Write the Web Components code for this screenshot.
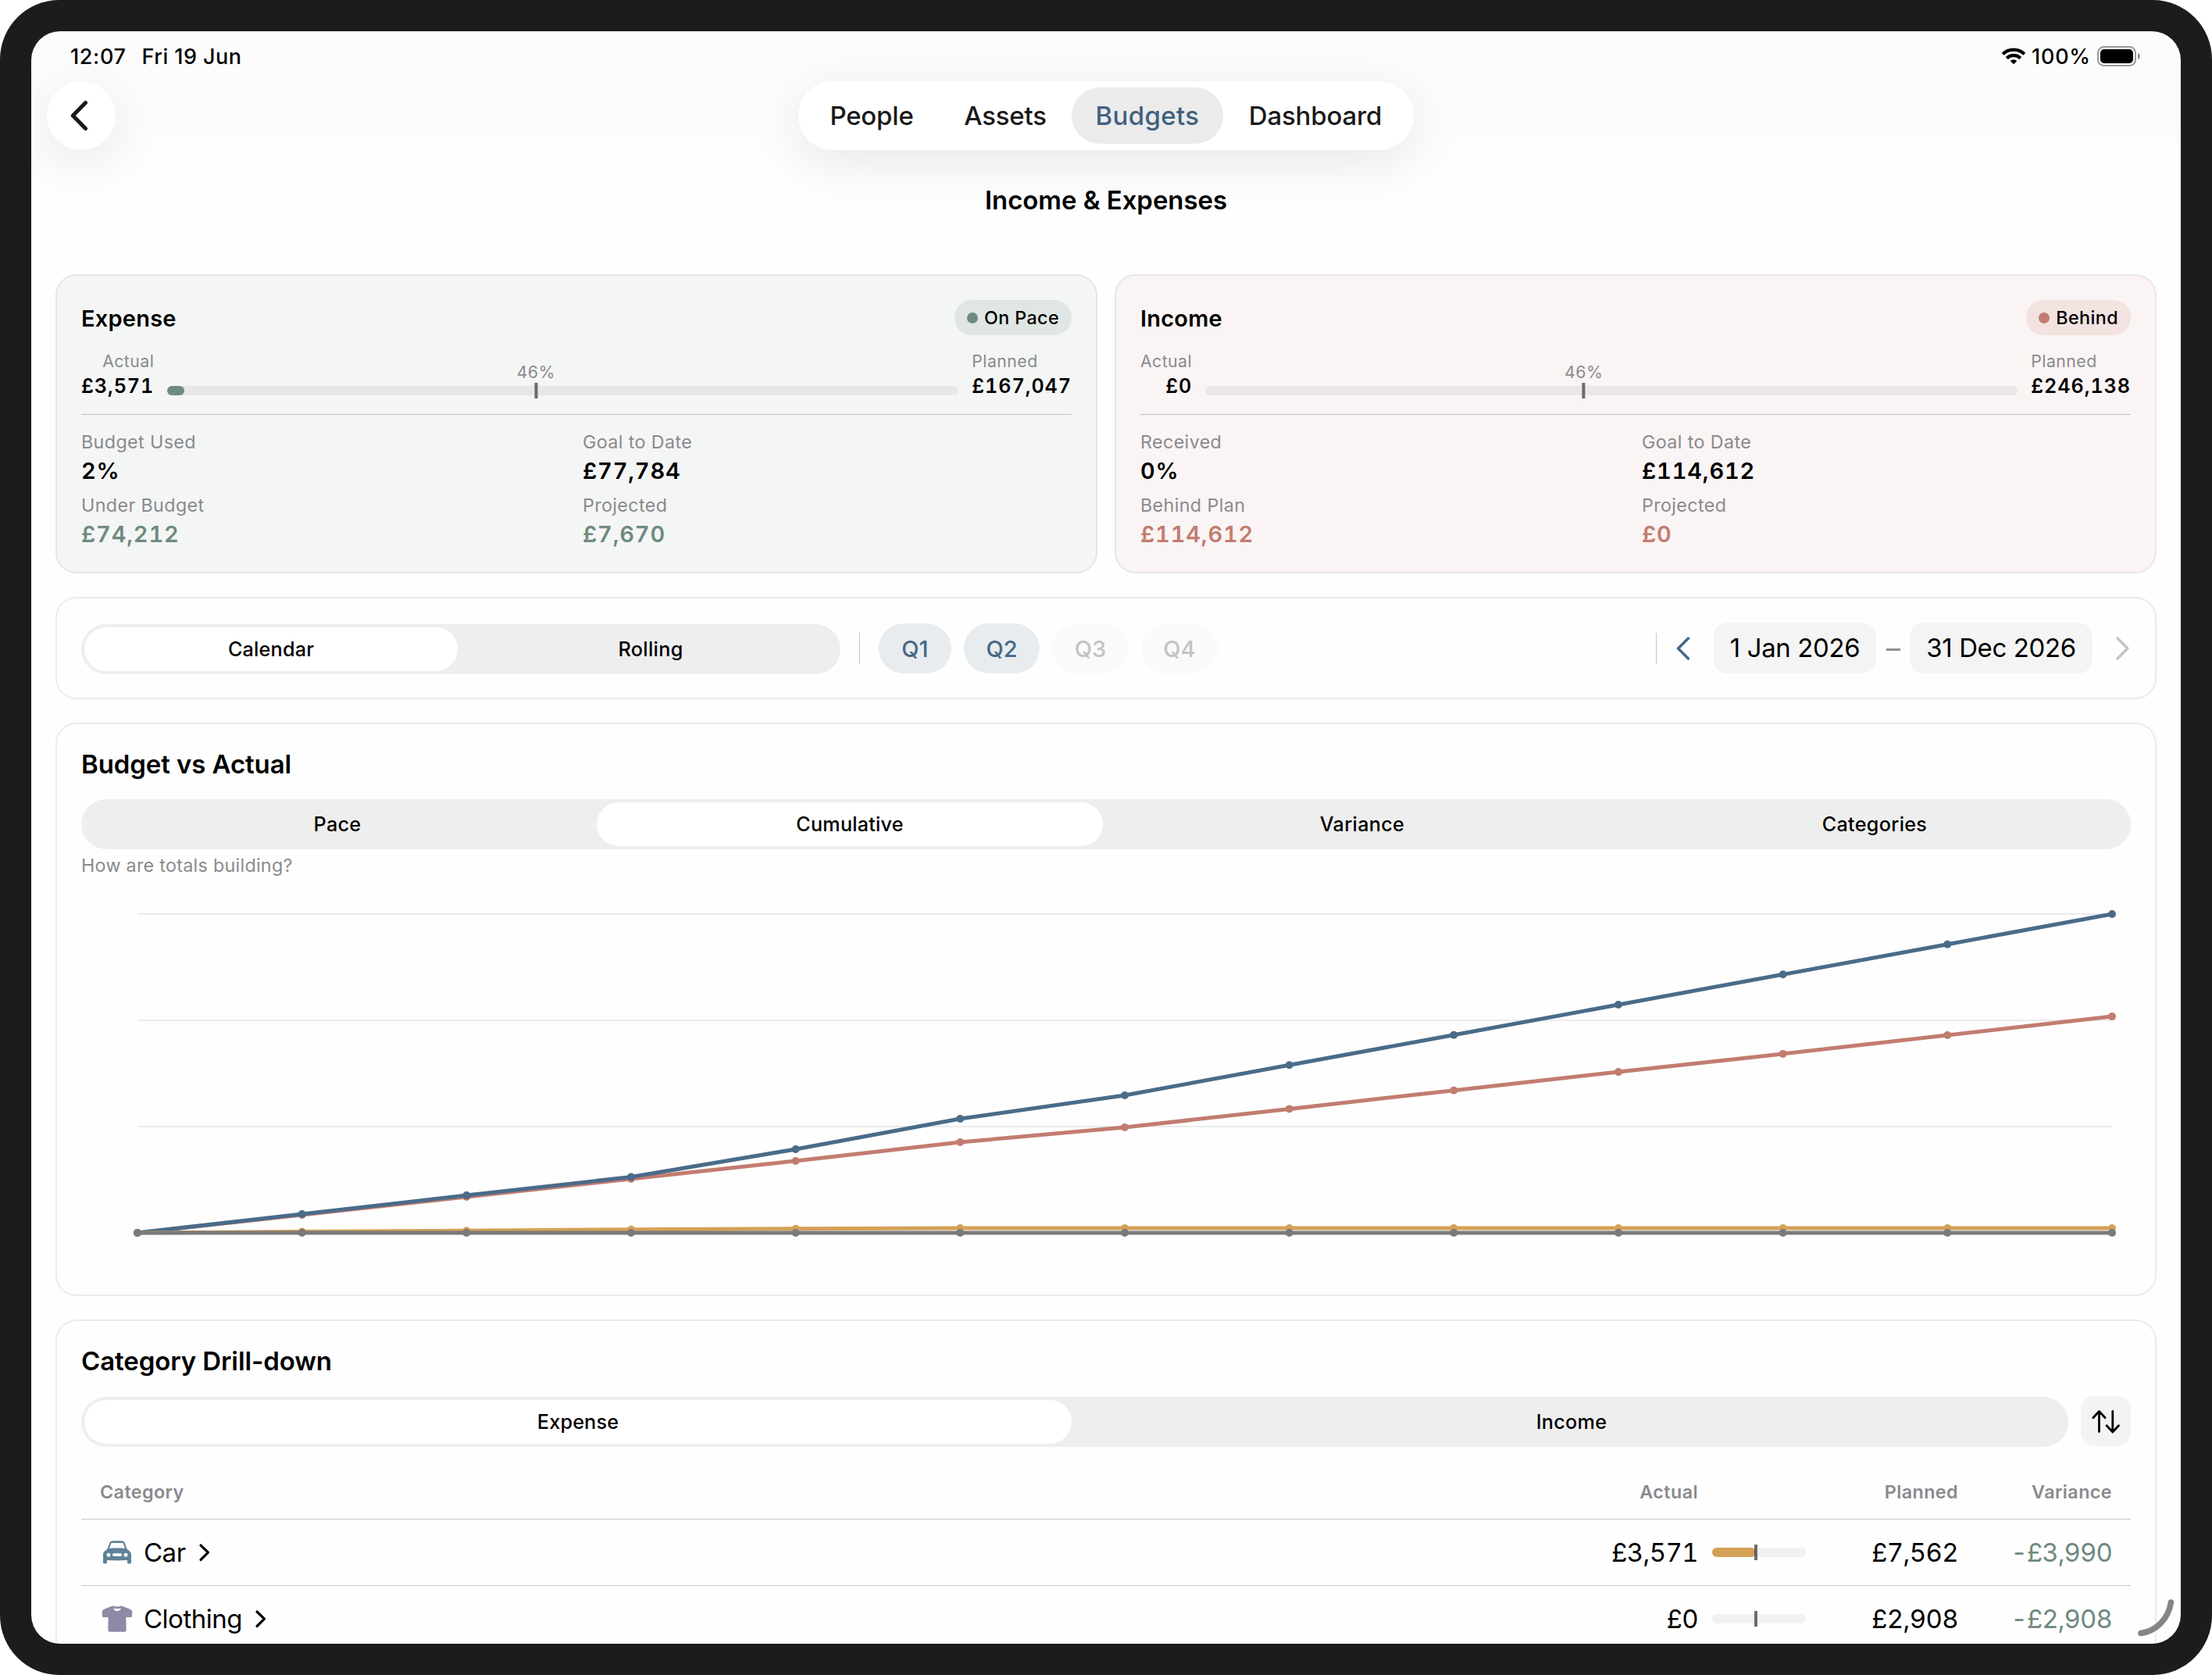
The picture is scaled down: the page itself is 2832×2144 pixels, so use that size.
<!DOCTYPE html>
<html lang="en">
<head>
  <meta charset="utf-8">
  <title>Income &amp; Expenses</title>
  <style>
    html, body {
      margin: 0;
      background: #fff;
    }
    body {
      width: 2832px;
      height: 2144px;
      overflow: hidden;
      font-family: Inter, "Liberation Sans", sans-serif;
      color: #000;
      --blue: #466886;
      --green: #6f8b7d;
      --red: #c27c70;
      --orange: #d4a157;
      --muted: #8a8a8e;
      --line: #c6c6c8;
    }
  </style>
</head>
<body>
  <tablet-frame>
    <status-bar time="12:07" date="Fri 19 Jun" battery="100%"></status-bar>
    <top-nav tabs="People:172,Assets:170,Budgets:194,Dashboard:236" selected="Budgets"></top-nav>
    <page-title>Income &amp; Expenses</page-title>

    <card-stack>
      <card-row>
        <budget-card heading="Expense" tone="green" status="On Pace" actual="£3,571" planned="£167,047"
          fill="22" pace="46">
          <metric-item label="Budget Used">2%</metric-item>
          <metric-item label="Goal to Date">£77,784</metric-item>
          <metric-item label="Under Budget" tinted>£74,212</metric-item>
          <metric-item label="Projected" tinted>£7,670</metric-item>
        </budget-card>
        <budget-card heading="Income" tone="red" status="Behind" actual="£0" planned="£246,138"
          fill="0" pace="46">
          <metric-item label="Received">0%</metric-item>
          <metric-item label="Goal to Date">£114,612</metric-item>
          <metric-item label="Behind Plan" tinted>£114,612</metric-item>
          <metric-item label="Projected" tinted>£0</metric-item>
        </budget-card>
      </card-row>

      <filter-bar></filter-bar>

      <panel-card heading="Budget vs Actual" style="height: 734px">
        <segmented-control options="Pace,Cumulative,Variance,Categories" selected="Cumulative"></segmented-control>
        <cumulative-chart>How are totals building?</cumulative-chart>
      </panel-card>

      <panel-card heading="Category Drill-down" style="height: 520px">
        <drill-toolbar></drill-toolbar>
        <category-head></category-head>
        <category-row name="Car" icon="car" actual="£3,571" planned="£7,562" variance="-£3,990" fill="56"></category-row>
        <category-row name="Clothing" icon="shirt" actual="£0" planned="£2,908" variance="-£2,908" fill="0"></category-row>
      </panel-card>
    </card-stack>
  </tablet-frame>

  <script>
    class BaseElement extends HTMLElement {
      constructor() {
        super();
        this._shadowRoot = this.attachShadow({ mode: 'open' });
      }

      connectedCallback() {
        this._shadowRoot.innerHTML = `
          <style>
            *, :host { box-sizing: border-box; }
            :host([hidden]) { display: none; }
            ${this.styles()}
          </style>
          ${this.render()}
        `;
      }

      attr(name) {
        return this.getAttribute(name) || '';
      }

      styles() { return ''; }
      render() { return '<slot></slot>'; }
    }

    class TabletFrame extends BaseElement {
      styles() {
        return `
          :host {
            display: block;
            width: 2832px;
            height: 2144px;
            padding: 40px;
            background: #1c1c1e;
            border-radius: 76px;
            position: relative;
          }
          .screen {
            display: flex;
            flex-direction: column;
            height: 2064px;
            overflow: hidden;
            border-radius: 37px;
            background: linear-gradient(#fcfcfc 0, #fcfcfc 110px, #fefefe 190px, #fefefe 100%);
          }
          /* window resize handle, floats over the content */
          .grip {
            position: absolute;
            right: 48px;
            bottom: 46px;
            width: 54px;
            height: 58px;
          }
        `;
      }

      render() {
        return `
          <div class="screen"><slot></slot></div>
          <svg class="grip" viewBox="0 0 54 58" fill="none" stroke="#858585" stroke-width="7.5" stroke-linecap="round">
            <path d="M49.500 11C46 32 31 48 11 50.500"/>
          </svg>
        `;
      }
    }

    class StatusBar extends BaseElement {
      styles() {
        return `
          :host {
            display: flex;
            flex: none;
            align-items: center;
            height: 64px;
            padding: 0 50px 0 50px;
            font-size: 27px;
            font-weight: 500;
            letter-spacing: 0.023em;
          }
          .date { margin-left: 20px; flex: 1; letter-spacing: 0.017em; }
          .wifi { width: 32px; height: 22px; margin-right: 7px; }
          .level { margin-right: 7px; letter-spacing: 0.03em; }
          .cell { width: 58px; height: 28px; }
        `;
      }

      render() {
        return `
          <span>${this.attr('time')}</span>
          <span class="date">${this.attr('date')}</span>
          <svg class="wifi" viewBox="0 0 32 22" fill="none" stroke="#000" stroke-width="4.200">
            <path d="M2.200 8.300a19.500 19.500 0 0 1 27.600 0"/>
            <path d="M7.200 13.600a12.400 12.400 0 0 1 17.600 0"/>
            <path d="M16 21.300l-4.300-4.300a6.200 6.200 0 0 1 8.600 0z" fill="#000" stroke="none"/>
          </svg>
          <span class="level">${this.attr('battery')}</span>
          <svg class="cell" viewBox="0 0 58 28">
            <rect x="2" y="2" width="48" height="24" rx="7.500" fill="none" stroke="#999" stroke-width="2"/>
            <rect x="5" y="5" width="42" height="18" rx="5" fill="#000"/>
            <path d="M53 10c3.800 1 3.800 7 0 8z" fill="#8e8e8e"/>
          </svg>
        `;
      }
    }

    class TopNav extends BaseElement {
      styles() {
        return `
          :host {
            display: grid;
            grid-template-columns: 1fr auto 1fr;
            flex: none;
            height: 88px;
            padding: 0 20px;
          }
          .back, .tabs {
            height: 88px;
            border-radius: 44px;
            background: #fff;
            box-shadow: 0 16px 70px rgba(0, 0, 0, 0.09);
          }
          .back {
            display: flex;
            align-items: center;
            justify-content: center;
            width: 88px;
          }
          .back svg { margin-right: 2px; }
          .tabs {
            display: flex;
            padding: 8px;
            font-size: 33px;
            font-weight: 500;
            letter-spacing: -0.006em;
            color: #1a1a1a;
          }
          .tab {
            display: flex;
            align-items: center;
            justify-content: center;
            height: 72px;
            border-radius: 36px;
          }
          .tab.on { background: #ebebeb; color: #41607e; letter-spacing: 0.01em; }
        `;
      }

      render() {
        const tabs = this.attr('tabs').split(',').map((entry) => {
          const [label, width] = entry.split(':');
          const on = label === this.attr('selected') ? ' on' : '';
          return `<div class="tab${on}" style="width: ${width}px">${label}</div>`;
        });
        return `
          <div class="back">
            <svg width="26" height="42" viewBox="0 0 26 42" fill="none" stroke="#1a1a1a" stroke-width="5" stroke-linecap="round" stroke-linejoin="round">
              <path d="M19.500 4.500L3.300 21l16.200 16.500"/>
            </svg>
          </div>
          <div class="tabs">${tabs.join('')}</div>
        `;
      }
    }

    class PageTitle extends BaseElement {
      styles() {
        return `
          :host {
            flex: none;
            height: 128px;
            text-align: center;
            font-size: 33px;
            font-weight: 600;
            line-height: 128px;
            letter-spacing: -0.002em;
          }
        `;
      }
    }

    class CardStack extends BaseElement {
      styles() {
        return `
          :host {
            display: flex;
            flex-direction: column;
            flex: none;
            gap: 30px;
            padding: 31px 31px 0;
          }
        `;
      }
    }

    class CardRow extends BaseElement {
      styles() {
        return `
          :host {
            display: grid;
            grid-template-columns: 1fr 1fr;
            gap: 22px;
          }
        `;
      }
    }

    class MetricItem extends BaseElement {
      styles() {
        return `
          :host { display: block; }
          .label {
            font-size: 23.3px;
            line-height: 34px;
            letter-spacing: 0.016em;
            color: var(--muted);
          }
          .value {
            font-size: 29px;
            font-weight: 560;
            line-height: 40px;
            letter-spacing: 0.028em;
            font-variant-numeric: tabular-nums;
          }
          :host([tinted]) .value { color: var(--tone); }
        `;
      }

      render() {
        return `
          <div class="label">${this.attr('label')}</div>
          <div class="value"><slot></slot></div>
        `;
      }
    }

    class BudgetCard extends BaseElement {
      styles() {
        return `
          :host {
            display: block;
            height: 383px;
            padding: 31px;
            border: 2px solid #e4e6e5;
            border-radius: 27px;
          }
          :host([tone="green"]) { --tone: var(--green); --badge: #e0e6e3; --track: #e6e8e7; background: #f4f6f5; }
          :host([tone="red"]) { --tone: var(--red); --badge: #f2e3e0; --track: #ebe7e6; background: #faf4f4; border-color: #e8e6e6; }
          .head {
            display: flex;
            justify-content: space-between;
            align-items: center;
            height: 45px;
            font-size: 29px;
            font-weight: 600;
            letter-spacing: 0.008em;
          }
          .head span { padding-top: 2px; }
          .badge {
            display: flex;
            align-items: center;
            gap: 8px;
            height: 45px;
            padding: 0 16px 0 16px;
            border-radius: 23px;
            background: var(--badge);
            font-size: 23.3px;
            font-weight: 500;
            letter-spacing: 0.017em;
          }
          .dot {
            width: 14px;
            height: 14px;
            border-radius: 50%;
            background: var(--tone);
          }
          .totals {
            display: flex;
            gap: 17px;
            margin-top: 18px;
          }
          .total { font-variant-numeric: tabular-nums; }
          .total.right { text-align: right; }
          .total small {
            display: block;
            font-size: 21.3px;
            line-height: 30px;
            letter-spacing: 0.02em;
            color: var(--muted);
          }
          .total b {
            display: block;
            font-size: 25.2px;
            font-weight: 570;
            line-height: 34px;
            letter-spacing: 0.036em;
          }
          .gauge {
            display: flex;
            flex: 1;
            align-items: flex-end;
            height: 64px;
            padding-bottom: 5px;
          }
          .track {
            position: relative;
            flex: 1;
            height: 12px;
            border-radius: 6px;
            background: var(--track);
          }
          .fill {
            height: 12px;
            border-radius: 6px;
            background: var(--tone);
          }
          .pace {
            position: absolute;
            bottom: -4px;
            left: 46.58%;
            display: flex;
            flex-direction: column;
            align-items: center;
            transform: translateX(-50%);
            font-size: 21.3px;
            line-height: 28px;
            letter-spacing: 0.02em;
            color: var(--muted);
          }
          .pace i {
            width: 4px;
            height: 20px;
            background: #6b6b6b;
          }
          .rule {
            height: 1px;
            margin: 19px 0 18px;
            background: #bfc0c0;
          }
          .metrics {
            display: grid;
            grid-template-columns: 1fr 1fr;
            gap: 7px 16px;
          }
        `;
      }

      render() {
        return `
          <div class="head">
            <span>${this.attr('heading')}</span>
            <div class="badge"><div class="dot"></div>${this.attr('status')}</div>
          </div>
          <div class="totals">
            <div class="total right"><small>Actual</small><b>${this.attr('actual')}</b></div>
            <div class="gauge">
              <div class="track">
                <div class="fill" style="width: ${this.attr('fill')}px"></div>
                <div class="pace">${this.attr('pace')}%<i></i></div>
              </div>
            </div>
            <div class="total"><small>Planned</small><b>${this.attr('planned')}</b></div>
          </div>
          <div class="rule"></div>
          <div class="metrics"><slot></slot></div>
        `;
      }
    }

    class SegmentedControl extends BaseElement {
      styles() {
        return `
          :host {
            display: flex;
            height: 64px;
            border-radius: 32px;
            background: #eee;
            font-size: 25.2px;
            font-weight: 450;
            letter-spacing: 0.012em;
          }
          .option {
            display: flex;
            flex: 1 1 0;
            padding: 4px;
          }
          .option span {
            flex: 1;
            border-radius: 28px;
            line-height: 56px;
            text-align: center;
          }
          .option.on span {
            background: #fff;
            font-weight: 550;
            letter-spacing: 0.007em;
          }
        `;
      }

      render() {
        return this.attr('options').split(',').map((option) => {
          const on = option === this.attr('selected') ? ' on' : '';
          return `<div class="option${on}"><span>${option}</span></div>`;
        }).join('');
      }
    }

    class FilterBar extends BaseElement {
      styles() {
        return `
          :host {
            display: flex;
            align-items: center;
            height: 131px;
            padding: 0 31px;
            border: 2px solid #ebebeb;
            border-radius: 27px;
          }
          segmented-control { width: 972px; margin-top: 3px; }
          .bar { width: 1px; height: 40px; background: var(--line); }
          .quarters {
            display: flex;
            flex: 1;
            gap: 16px;
            margin-left: 24px;
          }
          .quarter {
            width: 98px;
            height: 64px;
            border-radius: 32px;
            background: #e8ecef;
            color: var(--blue);
            font-size: 29px;
            font-weight: 500;
            line-height: 65px;
            text-align: center;
          }
          .quarter.off { background: #fafafa; color: #c3c3c4; }
          .date {
            height: 65px;
            border-radius: 18px;
            background: #f4f4f4;
            font-size: 33px;
            line-height: 65px;
            text-align: center;
            letter-spacing: -0.012em;
          }
          .dash { width: 18px; height: 3px; margin: 3px 12px 0 13px; background: #8e8e8e; }
          svg { width: 22px; height: 34px; fill: none; stroke-width: 3.5; stroke-linecap: round; stroke-linejoin: round; }
        `;
      }

      render() {
        return `
          <segmented-control options="Calendar,Rolling" selected="Calendar"></segmented-control>
          <div class="bar" style="margin-left: 24px"></div>
          <div class="quarters">
            <div class="quarter" style="width: 93px">Q1</div>
            <div class="quarter" style="width: 97px">Q2</div>
            <div class="quarter off">Q3</div>
            <div class="quarter off">Q4</div>
          </div>
          <div class="bar"></div>
          <svg viewBox="0 0 22 34" stroke="#466886" style="margin: 0 28px 0 23px"><path d="M17.500 4L4.500 17l13 13"/></svg>
          <div class="date" style="width: 208px">1 Jan 2026</div>
          <div class="dash"></div>
          <div class="date" style="width: 234px">31 Dec 2026</div>
          <svg viewBox="0 0 22 34" stroke="#c5c5c5" style="margin-left: 27px"><path d="M5 4l13 13L5 30"/></svg>
        `;
      }
    }

    class PanelCard extends BaseElement {
      styles() {
        return `
          :host {
            display: block;
            padding: 31px;
            border: 2px solid #ebebeb;
            border-radius: 27px;
          }
          h2 {
            margin: 0 0 25px;
            font-size: 33px;
            font-weight: 600;
            line-height: 40px;
            letter-spacing: -0.003em;
          }
        `;
      }

      render() {
        return `<h2>${this.attr('heading')}</h2><slot></slot>`;
      }
    }

    class CumulativeChart extends BaseElement {
      styles() {
        return `
          :host { display: block; }
          .caption {
            margin-top: 6px;
            font-size: 23.3px;
            line-height: 30px;
            letter-spacing: 0.012em;
            color: var(--muted);
          }
          svg { display: block; width: 2624px; height: 500px; }
        `;
      }

      line(color, values) {
        const points = values.map((value, i) => {
          const x = 72 + (2528 / 12) * i;
          const y = 455 - (value / 246138) * 408;
          return [x.toFixed(1), y.toFixed(1)];
        });
        return `
          <polyline points="${points.join(' ')}" fill="none" stroke="${color}" stroke-width="5" stroke-linejoin="round"/>
          ${points.map(([x, y]) => `<circle cx="${x}" cy="${y}" r="5" fill="${color}"/>`).join('')}
        `;
      }

      render() {
        const grid = [47, 183, 319, 455]
          .map((y) => `<path d="M72 ${y}H2600" stroke="#ebebeb" stroke-width="2"/>`);
        return `
          <div class="caption"><slot></slot></div>
          <svg viewBox="0 0 2624 500">
            ${grid.join('')}
            ${this.line('#c27c70', [0, 13900, 27750, 41650, 55500, 70000, 81450, 95700, 110000, 124200, 138200, 152600, 167047])}
            ${this.line('#4a6b89', [0, 14480, 28960, 43130, 64550, 88080, 106180, 129540, 152800, 176140, 199490, 222800, 246138])}
            ${this.line('#d4a157', [0, 900, 1700, 2600, 3200, 3571, 3571, 3571, 3571, 3571, 3571, 3571, 3571])}
            ${this.line('#7a7a7a', new Array(13).fill(0))}
          </svg>
        `;
      }
    }

    class DrillToolbar extends BaseElement {
      styles() {
        return `
          :host { display: flex; gap: 16px; }
          segmented-control { flex: 1; margin-top: 1px; }
          .sort {
            width: 64px;
            height: 64px;
            border-radius: 17px;
            background: #f3f3f3;
          }
        `;
      }

      render() {
        return `
          <segmented-control options="Expense,Income" selected="Expense"></segmented-control>
          <svg class="sort" viewBox="0 0 64 64" fill="none" stroke="#000" stroke-width="2.800" stroke-linecap="round" stroke-linejoin="round">
            <path d="M23.500 45.500V20M15.800 27.800l7.700-8.300 7.700 8.300"/>
            <path d="M40.800 19.500V45M33.100 37.700l7.700 8.300 7.700-8.300"/>
          </svg>
        `;
      }
    }

    // shared by the header and the rows, so that the columns line up
    const columns = `
      display: grid;
      grid-template-columns: 1fr 200px 138px 195px 197px;
      align-items: center;
      padding: 0 24px;
      border-bottom: 1px solid var(--line);
    `;

    class CategoryHead extends BaseElement {
      styles() {
        return `
          :host {
            ${columns}
            height: 70px;
            margin-top: 23px;
            text-align: right;
            font-size: 23.3px;
            font-weight: 580;
            letter-spacing: 0.018em;
            color: var(--muted);
          }
          .name { text-align: left; }
        `;
      }

      render() {
        return `
          <div class="name">Category</div>
          <div>Actual</div>
          <div></div>
          <div>Planned</div>
          <div>Variance</div>
        `;
      }
    }

    const icons = {
      car: `
        <svg viewBox="0 0 40 34" fill="#5f8197">
          <path fill-rule="evenodd" d="M10.500 2.600C11 1.200 12 .700 13.400.600c4.400-.400 8.800-.400 13.200 0 1.400.100 2.400.600 2.900 2L32.700 11c2.900 2 5.300 3.700 5.300 7v9.800c0 1-.700 1.700-1.700 1.700h-1.600c-1 0-1.700-.700-1.700-1.700v-2.700c-8.500.500-17.500.500-26 0v2.700c0 1-.700 1.700-1.700 1.700H3.700c-1 0-1.700-.700-1.700-1.700V18c0-3.300 2.400-5 5.300-7zM10 10c6.600-.600 13.400-.600 20 0l-2.200-6.200c-.200-.500-.500-.700-1-.700-4.500-.300-9.100-.300-13.600 0-.500 0-.800.200-1 .7zM9 15.700a2.500 2.500 0 1 0 0 5 2.500 2.500 0 0 0 0-5zm22 0a2.500 2.500 0 1 0 0 5 2.500 2.500 0 0 0 0-5zM15.700 16.200a1.800 1.800 0 0 0 0 3.700h8.600a1.800 1.800 0 0 0 0-3.700z" transform="translate(0 2)"/>
        </svg>`,
      shirt: `
        <svg viewBox="0 0 40 34" fill="#8f89a8">
          <path d="M13.300.700L4.600 4.300C2.200 5.300.700 6.700.600 8.300l.600 5.600c.200 1 .900 1.500 1.800 1.400l4.800-.300c.600 0 .900.300.900.900L8.300 31c0 1.900 1 2.800 2.900 2.800h17.600c1.900 0 2.900-.900 2.900-2.800l-.400-15.100c0-.600.300-.900.900-.900l4.800.300c.900.100 1.600-.400 1.800-1.400l.600-5.600c-.100-1.600-1.600-3-4-4L26.700.700c-.600-.200-1.200-.200-1.700 0-3 .900-7 .900-10 0-.500-.200-1.100-.200-1.700 0z"/>
          <path d="M15 3.600c3.300 1 6.700 1 10 0-.800 2.300-2.600 3.600-5 3.600s-4.200-1.300-5-3.600z" fill="#fff"/>
        </svg>`,
    };

    class CategoryRow extends BaseElement {
      styles() {
        return `
          :host {
            ${columns}
            height: 85px;
            text-align: right;
            font-size: 33px;
            letter-spacing: -0.02em;
            font-variant-numeric: tabular-nums;
          }
          .name { display: flex; align-items: center; letter-spacing: -0.015em; }
          .icon { width: 40px; height: 34px; margin: 0 14px 0 2px; }
          .icon svg { display: block; width: 40px; height: 34px; }
          .chevron { width: 16px; height: 24px; margin-left: 16px; }
          .track {
            position: relative;
            width: 120px;
            height: 12px;
            margin-left: 18px;
            border-radius: 6px;
            background: #f1f1f1;
          }
          .fill { height: 12px; border-radius: 6px; background: var(--orange); }
          .track i {
            position: absolute;
            left: 54px;
            top: -4px;
            width: 4px;
            height: 20px;
            background: rgba(60, 60, 60, 0.75);
          }
          .variance { color: var(--green); letter-spacing: -0.028em; }
        `;
      }

      render() {
        return `
          <div class="name">
            <div class="icon">${icons[this.attr('icon')]}</div>
            ${this.attr('name')}
            <svg class="chevron" viewBox="0 0 16 24" fill="none" stroke="#000" stroke-width="3.200" stroke-linecap="round" stroke-linejoin="round">
              <path d="M3 3l9.500 9.200L3 21.500"/>
            </svg>
          </div>
          <div>${this.attr('actual')}</div>
          <div class="track"><div class="fill" style="width: ${this.attr('fill')}px"></div><i></i></div>
          <div>${this.attr('planned')}</div>
          <div class="variance">${this.attr('variance')}</div>
        `;
      }
    }

    customElements.define('tablet-frame', TabletFrame);
    customElements.define('status-bar', StatusBar);
    customElements.define('top-nav', TopNav);
    customElements.define('page-title', PageTitle);
    customElements.define('card-stack', CardStack);
    customElements.define('card-row', CardRow);
    customElements.define('metric-item', MetricItem);
    customElements.define('budget-card', BudgetCard);
    customElements.define('segmented-control', SegmentedControl);
    customElements.define('filter-bar', FilterBar);
    customElements.define('panel-card', PanelCard);
    customElements.define('cumulative-chart', CumulativeChart);
    customElements.define('drill-toolbar', DrillToolbar);
    customElements.define('category-head', CategoryHead);
    customElements.define('category-row', CategoryRow);
  </script>
</body>
</html>
